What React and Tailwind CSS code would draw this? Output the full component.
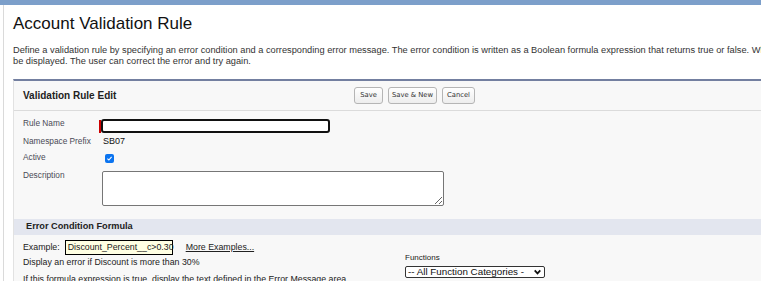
import React from 'react';

const labelCls = 'w-[85px] shrink-0 pl-[9px] text-[8.3px] text-[#4a4a56]';

const Button = ({ children, w }) => (
  <button
    className={`${w} h-[17px] rounded-[3px] border border-[#b5b5b5] bg-gradient-to-b from-white to-[#ededed] font-['DejaVu_Sans',Verdana,sans-serif] text-[6.8px] leading-none text-[#333]`}
  >
    {children}
  </button>
);

const App = () => {
  return (
    <div className="w-[761px] h-[281px] overflow-hidden bg-white font-['Liberation_Sans',Arial,sans-serif]">
      <div className="h-[5px] bg-[#7c9fca]" />
      <div className="flex">
        <div className="w-[3px] shrink-0" />
        <div className="w-px shrink-0 bg-[#dadada]" />
        <div className="flex-1 min-w-0 pl-[9px]">
          <h1 className="mt-[9px] text-[17px] leading-[20px] text-[#111]">Account Validation Rule</h1>
          <div className="mt-[11px] text-[9.25px] leading-[11px] text-[#333] whitespace-nowrap">
            <div>
              Define a validation rule by specifying an error condition and a corresponding error message. The error
              condition is written as a Boolean formula expression that returns true or false. When the formula expression
              returns true, the save will be aborted and the error message will
            </div>
            <div>be displayed. The user can correct the error and try again.</div>
          </div>

          <div className="mt-[12px] border-t-2 border-t-[#737fa0] border-l border-l-[#e2e2e2] bg-[#f8f8f8] pb-[10px]">
            <div className="h-[30px] flex items-center border-b border-[#dbdbdb]">
              <div className="w-[340px] shrink-0 pl-[9px] text-[10px] font-bold text-[#222]">Validation Rule Edit</div>
              <div className="flex gap-[5px]">
                <Button w="w-[29px]">Save</Button>
                <Button w="w-[49px]">Save &amp; New</Button>
                <Button w="w-[33px]">Cancel</Button>
              </div>
            </div>

            <div className="pt-[8px]">
              <div className="flex items-start">
                <div className={`${labelCls} leading-[9px]`}>Rule Name</div>
                <div className="w-[2px] h-[13px] mt-[1px] bg-[#c00]" />
                <div className="w-[229px] h-[14px] rounded-[3px] border-2 border-[#111] bg-white" />
              </div>
              <div className="flex items-start mt-[2px]">
                <div className={`${labelCls} leading-[12px]`}>Namespace Prefix</div>
                <div className="pl-[4px] text-[9px] leading-[12px] text-[#111]">SB07</div>
              </div>
              <div className="flex items-start mt-[5px]">
                <div className={`${labelCls} leading-[10px]`}>Active</div>
                <div className="ml-[6px] mt-[2px] w-[9px] h-[9px] rounded-[2px] bg-[#0b74f0] flex items-center justify-center">
                  <svg viewBox="0 0 10 10" className="w-[7px] h-[7px]">
                    <path d="M2 5.2 L4.1 7.2 L8 2.8" fill="none" stroke="white" strokeWidth="1.6" />
                  </svg>
                </div>
              </div>
              <div className="flex items-start mt-[8px]">
                <div className={`${labelCls} leading-[9px]`}>Description</div>
                <textarea
                  readOnly
                  className="ml-[3px] w-[342px] h-[35px] rounded-[2px] border border-[#767676] bg-white"
                />
              </div>
            </div>

            <div className="mt-[13px] h-[16px] flex items-center bg-[#e3e6ef] pl-[12px] text-[9.2px] font-bold text-[#222]">
              Error Condition Formula
            </div>

            <div className="flex pt-[5px]">
              <div className="w-[391px] shrink-0 pl-[9px] text-[8.8px] text-[#222]">
                <div className="flex items-center h-[15px]">
                  <span>Example:</span>
                  <span className="ml-[5px] h-[15px] w-[108px] flex items-center border border-black bg-[#ffffe3] px-[2px] whitespace-nowrap">
                    Discount_Percent__c&gt;0.30
                  </span>
                  <span className="ml-[13px] underline">More Examples...</span>
                </div>
                <div className="mt-[1px] leading-[12px]">Display an error if Discount is more than 30%</div>
                <div className="mt-[5px] leading-[12px] whitespace-nowrap">
                  If this formula expression is true, display the text defined in the Error Message area
                </div>
              </div>
              <div>
                <div className="mt-[13px] text-[8px] leading-[10px] text-[#222]">Functions</div>
                <div className="mt-[3px] w-[140px] h-[12px] flex items-center justify-between rounded-[2px] border border-[#333] bg-white pl-[2px] pr-[2px] text-[9.8px] text-[#111] whitespace-nowrap">
                  <span>-- All Function Categories -</span>
                  <svg viewBox="0 0 10 10" className="w-[9px] h-[8px]">
                    <path d="M1.5 3 L5 6.8 L8.5 3" fill="none" stroke="#111" strokeWidth="2.2" />
                  </svg>
                </div>
              </div>
            </div>
          </div>
        </div>
      </div>
    </div>
  );
};

export default App;
